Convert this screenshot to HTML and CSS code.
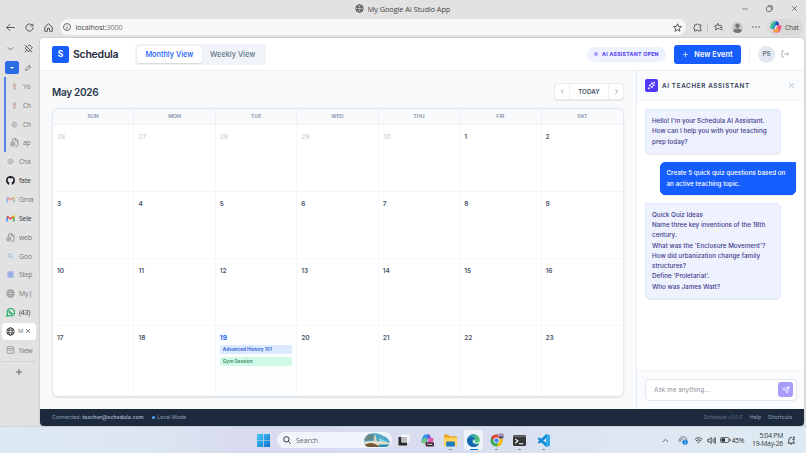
FILE: index.html
```html
<!DOCTYPE html>
<html lang="en">
<head>
  <meta charset="UTF-8" />
  <meta name="viewport" content="width=device-width, initial-scale=1.0"/>
  <title>My Google AI Studio App</title>
  <link rel="stylesheet" href="styles.css">
</head>
<body>
  <!-- Shared icons -->
  <svg class="sprite">
    <symbol id="globe" viewBox="0 0 24 24"><circle cx="12" cy="12" r="10"/><ellipse cx="12" cy="12" rx="4.5" ry="10"/><path d="M3 8.5h18M3 15.5h18"/></symbol>
    <symbol id="close" viewBox="0 0 24 24"><path d="M4 4l16 16M20 4L4 20"/></symbol>
    <symbol id="plus" viewBox="0 0 24 24"><path d="M12 3v18M3 12h18"/></symbol>
    <symbol id="down" viewBox="0 0 24 24"><path d="M3 8l9 9 9-9"/></symbol>
    <symbol id="left" viewBox="0 0 24 24"><path d="M15 5l-7 7 7 7"/></symbol>
    <symbol id="right" viewBox="0 0 24 24"><path d="M9 5l7 7-7 7"/></symbol>
    <symbol id="page" viewBox="0 0 24 24"><path d="M7 9V4q0-2 2-2h7l5 5v13q0 2-2 2h-5M15 2v6h6"/><circle cx="7" cy="16" r="5.5"/><circle cx="7" cy="16" r="2"/></symbol>
    <symbol id="gpt" viewBox="0 0 24 24"><circle cx="12" cy="12" r="12" fill="#efefef" stroke="none"/><circle cx="12" cy="12" r="7.500" fill="#cfcfcf" stroke="#a2a2a2"/><circle cx="12" cy="12" r="3" stroke="#a2a2a2"/></symbol>
    <symbol id="mic" viewBox="0 0 24 24"><rect x="8" y="2" width="8" height="13" rx="4" fill="#dcb3a8"/><path d="M9 18h6v4H9z"/></symbol>
    <symbol id="gmail" viewBox="0 0 24 18"><path d="M3 17V4" stroke="#4285f4"/><path d="M21 17V4" stroke="#34a853"/><path d="M3 3l9 7 9-7" stroke="#ea4335"/><path d="M19 4.5l2-1.5v4" stroke="#fbbc04"/></symbol>
    <symbol id="pin" viewBox="0 0 24 24"><path d="M10 6l4-4 8 8-4 4M6 9l-3 2 10 10 2-4M8 16l-6 6M2 2l20 20"/></symbol>
  </svg>

  <div class="titlebar">
    <div class="window-title">
      <svg class="icon i9"><use href="#globe"/></svg>
      <span>My Google AI Studio App</span>
    </div>
    <div class="window-buttons">
      <svg class="icon i6" viewBox="0 0 24 24"><path d="M1 12h22"/></svg>
      <svg class="icon i7" viewBox="0 0 24 24"><rect x="2" y="6" width="16" height="16" rx="3"/><path d="M7 2h11q4 0 4 4v11"/></svg>
      <svg class="icon i7"><use href="#close"/></svg>
    </div>
  </div>

  <div class="toolbar">
    <div class="nav-buttons">
      <svg class="icon i9" viewBox="0 0 24 24"><path d="M23 12H2M11 3l-9 9 9 9"/></svg>
      <svg class="icon i9" viewBox="0 0 24 24"><path d="M20 7a9.5 9.5 0 1 0 1.5 5M21 2v6h-6"/></svg>
      <svg class="icon i9" viewBox="0 0 24 24"><path d="M2 11L12 2l10 9v11h-7v-8H9v8H2z"/></svg>
    </div>
    <div class="address">
      <svg class="icon i8" viewBox="0 0 24 24"><circle cx="12" cy="12" r="10.5"/><path d="M12 11v7M12 6v2"/></svg>
      <span class="url">localhost:<em>3000</em></span>
      <svg class="icon i9" viewBox="0 0 24 24"><path d="M12 2l3 7 7.500.6-5.700 5 1.700 7.400L12 18l-6.500 4 1.700-7.400-5.700-5L9 9z"/></svg>
    </div>
    <div class="tools">
      <svg class="icon i9" viewBox="0 0 24 24"><path d="M8 5q4-6 7 0h6v5q-6 1 0 7v4h-6q-4-5-7 0H4v-5q-5-4 0-6V5z"/></svg>
      <span class="tool-divider"></span>
      <svg class="icon i9" viewBox="0 0 24 24"><path d="M15 16l-5-2-5 5v-7L1 8l6-1 3-6 3 6h8M16 12h7M17 17h6"/></svg>
      <svg class="i11 profile" viewBox="0 0 24 24"><circle cx="12" cy="12" r="12" fill="#cfcbc6"/><circle cx="12" cy="8" r="5" fill="#777"/><path d="M3 20q0-6 9-6t9 6q-9 8-18 0z" fill="#777"/></svg>
      <svg class="i8 dots" viewBox="0 0 24 24"><circle cx="3" cy="12" r="2"/><circle cx="12" cy="12" r="2"/><circle cx="21" cy="12" r="2"/></svg>
    </div>
    <div class="copilot">
      <svg class="i12" viewBox="0 0 24 24"><path d="M8 1h6q3 0 4 5l-5 1-3 9H4q-4 0-3-5l3-7q1-3 4-3z" fill="#2487e8"/><path d="M4 4q2-3 5-3l2 1-5 11q-1 3-3 3-3-1-2-5z" fill="#3cc28b"/><path d="M16 23h-6q-3 0-4-5l5-1 3-9h6q4 0 3 5l-3 7q-1 3-4 3z" fill="#ef5b8a"/><path d="M6 17h5q2 0 3-4l4 5q-1 5-5 5-5 1-7-6z" fill="#f8a238"/><path d="M12 1h2q3 0 4 7h-4q-2 0-3 3z" fill="#2346c8"/><path d="M11 9h3l-2 7H9z" fill="#f5f5f5"/></svg>
      <span>Chat</span>
    </div>
  </div>

  <div class="browser">
    <nav class="tabs">
      <div class="tabs-top"><svg class="icon i7"><use href="#down"/></svg><svg class="icon i9"><use href="#pin"/></svg></div>
      <div class="tabs-group"><span class="group-button"></span><svg class="icon i6" viewBox="0 0 24 24"><path d="M2 22l2-8L16 2q3-1 6 6L10 20zM13 5l6 6"/></svg></div>
      <div class="grouped">
        <div class="tab faded"><svg class="icon i7 mic"><use href="#mic"/></svg><span>Yo</span></div>
        <div class="tab faded"><svg class="icon i7 mic"><use href="#mic"/></svg><span>Ch</span></div>
        <div class="tab faded"><svg class="icon i9"><use href="#gpt"/></svg><span>Ch</span></div>
        <div class="tab faded"><svg class="icon i9"><use href="#page"/></svg><span>ap</span></div>
      </div>
      <div class="tab faded"><svg class="icon i9"><use href="#gpt"/></svg><span>Cha</span></div>
      <div class="tab"><svg class="i9" viewBox="0 0 24 24"><circle cx="12" cy="12" r="12" fill="#20242a"/><path d="M8.500 24v-5q0-1.500 1-2-5-.5-5-5.500 0-2 1.200-3.300Q5.200 6.500 6 5q1.700 0 3.300 1.200 2.700-.6 5.400 0Q16.500 5 18 5q.8 1.500.3 3.200 1.200 1.300 1.200 3.300 0 5-5 5.500 1 .5 1 2v5z" fill="#e6e6e6"/></svg><span>fate</span></div>
      <div class="tab faded"><svg class="gmail"><use href="#gmail"/></svg><span>Gma</span></div>
      <div class="tab"><svg class="gmail"><use href="#gmail"/></svg><span>Sele</span></div>
      <div class="tab faded"><svg class="icon i9"><use href="#page"/></svg><span>web</span></div>
      <div class="tab faded"><svg class="icon i6 search-tab" viewBox="0 0 24 24"><circle cx="10" cy="10" r="7"/><path d="M15 15l7 7"/></svg><span>Goo</span></div>
      <div class="tab faded"><svg class="i7" viewBox="0 0 24 24"><rect x="1" y="1" width="22" height="22" rx="4" fill="#97ace6"/><path d="M6 8h12M6 15h12" stroke="#7590de" stroke-width="3"/></svg><span>Step</span></div>
      <div class="tab faded"><svg class="icon i9"><use href="#globe"/></svg><span>My (</span></div>
      <div class="tab"><svg class="icon i9 whatsapp" viewBox="0 0 24 24"><path d="M2 22l2-6a10 10 0 1 1 4 4z"/><path d="M8 7q-1 4 3 7 4 3 6 1l-3-2-2 1-3-4 1-1z"/></svg><span>(43)</span></div>
      <div class="tab active"><svg class="icon i9"><use href="#globe"/></svg><span>M</span><svg class="icon i6"><use href="#close"/></svg></div>
      <div class="tab faded"><svg class="icon i8" viewBox="0 0 24 24"><rect x="2" y="2" width="20" height="20" rx="3"/><path d="M2 8h20M6 13h12"/></svg><span>New</span></div>
      <div class="add-tab"><svg class="icon i8"><use href="#plus"/></svg></div>
    </nav>

    <div class="app">
      <header class="app-header">
        <div class="logo">S</div>
        <h1>Schedula</h1>
        <div class="view-switch">
          <button class="view selected">Monthly View</button>
          <button class="view">Weekly View</button>
        </div>
        <div class="header-actions">
          <span class="assistant-badge">AI ASSISTANT OPEN</span>
          <button class="new-event"><svg class="icon i7"><use href="#plus"/></svg>New Event</button>
          <span class="header-divider"></span>
          <span class="avatar">PS</span>
          <svg class="icon i8 logout" viewBox="0 0 24 24"><path d="M9 3H3v18h6M9 12h13M17 7l5 5-5 5"/></svg>
        </div>
      </header>

      <div class="workspace">
        <main class="calendar-panel">
          <div class="calendar-head">
            <h2>May 2026</h2>
            <div class="month-nav">
              <button><svg class="icon i7"><use href="#left"/></svg></button>
              <button class="today-button">TODAY</button>
              <button><svg class="icon i7"><use href="#right"/></svg></button>
            </div>
          </div>
          <div class="calendar">
            <div class="weekday">SUN</div><div class="weekday">MON</div><div class="weekday">TUE</div><div class="weekday">WED</div><div class="weekday">THU</div><div class="weekday">FRI</div><div class="weekday">SAT</div>
            <div class="day other">26</div><div class="day other">27</div><div class="day other">28</div><div class="day other">29</div><div class="day other">30</div><div class="day">1</div><div class="day">2</div>
            <div class="day">3</div><div class="day">4</div><div class="day">5</div><div class="day">6</div><div class="day">7</div><div class="day">8</div><div class="day">9</div>
            <div class="day">10</div><div class="day">11</div><div class="day">12</div><div class="day">13</div><div class="day">14</div><div class="day">15</div><div class="day">16</div>
            <div class="day">17</div><div class="day">18</div>
            <div class="day today">19
              <div class="event class-event">Advanced History 101</div>
              <div class="event personal-event">Gym Session</div>
            </div>
            <div class="day">20</div><div class="day">21</div><div class="day">22</div><div class="day">23</div>
          </div>
        </main>

        <aside class="assistant">
          <div class="assistant-head">
            <span class="assistant-icon"><svg class="icon i9" viewBox="0 0 24 24"><path d="M13 4l2 5 5 2-5 2-2 6-2-5-6-2 6-3zM5 17v5M2.500 19.500h5M19 2v5M16.500 4.500h5"/></svg></span>
            <h3>AI TEACHER ASSISTANT</h3>
            <svg class="icon i7"><use href="#close"/></svg>
          </div>
          <div class="messages">
            <div class="message">Hello! I'm your Schedula AI Assistant.<br>How can I help you with your teaching<br>prep today?</div>
            <div class="message mine">Create 5 quick quiz questions based on<br>an active teaching topic.</div>
            <div class="message">Quick Quiz Ideas<br>Name three key inventions of the 18th<br>century.<br>What was the 'Enclosure Movement'?<br>How did urbanization change family<br>structures?<br>Define 'Proletariat'.<br>Who was James Watt?</div>
          </div>
          <div class="composer">
            <div class="composer-box">
              <span>Ask me anything...</span>
              <button class="send"><svg class="icon i8" viewBox="0 0 24 24"><path d="M22 2L2 9l9 4 4 9zM22 2L11 13"/></svg></button>
            </div>
          </div>
        </aside>
      </div>

      <footer class="status-bar">
        <span>Connected: <b>teacher@schedula.com</b></span>
        <span class="mode">Local Mode</span>
        <span class="version">Schedule v1.0.0</span>
        <span>Help</span>
        <span>Shortcuts</span>
      </footer>
    </div>
  </div>

  <div class="taskbar">
    <div class="task-apps">
      <svg class="start" viewBox="0 0 26 26"><defs><linearGradient id="win" x2="1" y2="1"><stop stop-color="#4cc9f5"/><stop offset="1" stop-color="#0870cf"/></linearGradient></defs><path d="M0 0h12.300v12.300H0zM13.700 0H26v12.300H13.700zM0 13.700h12.300V26H0zM13.700 13.700H26V26H13.700z" fill="url(#win)"/></svg>
      <div class="task-search">
        <svg class="icon i8" viewBox="0 0 24 24"><circle cx="10" cy="10" r="8"/><path d="M16 16l7 7"/></svg>
        <span>Search</span>
        <svg class="search-art" viewBox="0 0 52 28"><defs><clipPath id="hill"><path d="M0 18Q1 4 14 1q16-2 24 5 12 2 14 15-4 7-12 7H10Q1 27 0 18z"/></clipPath></defs><g clip-path="url(#hill)"><path d="M0 0h52v28H0z" fill="#50a9c8"/><path d="M0 4q14-5 22 3L16 15H0z" fill="#668889"/><path d="M20 8l3-5 3 17h-6z" fill="#d9d2bd"/><path d="M30 10l20 9-18 3z" fill="#8dd4e2"/><path d="M0 17q25-3 52 3v5H0z" fill="#e4dfc9"/><path d="M2 23q13-6 22 0l8 5H2z" fill="#765437"/><path d="M29 23h22v5H33z" fill="#238cb6"/></g></svg>
      </div>
      <span class="task"><svg class="i12" viewBox="0 0 24 24"><rect x="7" y="1" width="16" height="16" fill="#f7f7f7"/><path d="M1 6h6v11h11v6H1z" fill="#282828"/><path d="M7 6h11v11H7z" fill="#bdbdbd"/></svg></span>
      <span class="task"><svg class="i13" viewBox="0 0 24 24"><path d="M8 1h6q3 0 4 5l-5 1-3 9H4q-4 0-3-5l3-7q1-3 4-3z" fill="#2499e8"/><path d="M4 9l3-2 4 1-2 7q-2 4-6 2-3-2-2-5z" fill="#7cc47d"/><path d="M14 7h6q4 0 3 5l-3 7q-1 3-4 3h-6q-3 0-3-5h3q2 0 3-4z" fill="#e05bb1"/><path d="M12 1h2q3 0 4 7h-4q-2 0-3 3z" fill="#7057d6"/><rect x="9" y="15" width="15" height="8" rx="2" fill="#3c2c32"/><path d="M12 19h9" stroke="#ddd" stroke-width="2"/></svg></span>
      <span class="task running"><svg class="i13" viewBox="0 0 24 24"><path d="M0 3q0-2 2-2h6l3 3h11q2 0 2 2v7H0z" fill="#e7a825"/><path d="M0 7h24v14q0 1-1 1H1q-1 0-1-1z" fill="#ffd45d"/><path d="M4 16q0-2 2-2h12q2 0 2 2v7H4z" fill="#1f79bd"/></svg></span>
      <span class="task running current"><svg class="i13" viewBox="0 0 24 24"><defs><linearGradient id="edge" x2="1"><stop stop-color="#167cd0"/><stop offset="1" stop-color="#63d46c"/></linearGradient></defs><circle cx="12" cy="12" r="12" fill="url(#edge)"/><path d="M0 12q1-6 9-6 5 0 6 4-5-2-6 2 0 9 13 7-3 5-10 5Q1 23 0 12z" fill="#1163b4"/><path d="M13 11q2-1 2 2-2 3 2 3 4 1 7-3-1 5-6 5-6 0-7-4z" fill="#ecf5fc"/></svg></span>
      <span class="task running"><svg class="i14" viewBox="0 0 28 28"><circle cx="13" cy="15" r="12" fill="#34a853"/><path d="M2.600 9A12 12 0 0 1 24 10H13l-4 8z" fill="#ea4335"/><path d="M24 10a12 12 0 0 1-11 17l6-10-3-7z" fill="#fbbc04"/><circle cx="13" cy="15" r="6" fill="#fff"/><circle cx="13" cy="15" r="4.500" fill="#4285f4"/><circle cx="22" cy="6" r="6" fill="#a993bc"/><path d="M17 8q5-4 10 0-4 6-10 0z" fill="#584962"/></svg></span>
      <span class="task running"><svg class="i13" viewBox="0 0 24 24"><rect x="0" y="2" width="24" height="20" rx="2" fill="#363636"/><path d="M0 5V3h24v2z" fill="#888"/><path d="M4 9l5 4-5 4M11 18h8" fill="none" stroke="#fff" stroke-width="2"/></svg></span>
      <span class="task running"><svg class="i13" viewBox="0 0 24 24"><path d="M17 0l7 3v18l-7 3L1 9l3-3 14 11V7L4 18l-3-3z" fill="#168dd8"/><path d="M17 0l7 3v18l-7 3z" fill="#30a9ef"/></svg></span>
    </div>
    <div class="tray">
      <svg class="icon i7" viewBox="0 0 24 24"><path d="M3 17l9-9 9 9"/></svg>
      <svg class="i10 sync" viewBox="0 0 24 24"><path d="M5 17q-6-4 0-9 4-6 10-3 5 1 6 6" fill="none" stroke="#666" stroke-width="2"/><path d="M5 16q0-7 7-7" fill="none" stroke="#666" stroke-width="2"/><circle cx="17" cy="17" r="6.500" fill="#087bd8"/><path d="M17 16v5M17 12v2" stroke="#fff" stroke-width="2"/></svg>
      <svg class="icon i9 wifi" viewBox="0 0 24 24"><path d="M2 9q10-9 20 0M5 13q7-6 14 0M9 17q3-3 6 0M12 20v1"/></svg>
      <svg class="icon i9" viewBox="0 0 24 24"><path d="M2 9h4l5-5v16l-5-5H2zM15 9q3 3 0 6M18 6q5 6 0 12M21 3q6 9 0 18"/></svg>
      <svg class="battery" viewBox="0 0 22 12"><rect x="1" y="1" width="17" height="10" rx="3" fill="none" stroke="#333" stroke-width="1.500"/><rect x="3" y="3" width="7" height="6" fill="#222"/><path d="M20 4v4" stroke="#333" stroke-width="2"/></svg>
      <span class="charge">45%</span>
      <div class="clock">5:04 PM<br>19-May-26</div>
      <svg class="icon i9" viewBox="0 0 24 24"><path d="M13 3q-8 0-8 8v5l-3 3h18l-2-3v-3M8 20q3 4 6 0M15 3h6l-6 7h6"/></svg>
    </div>
  </div>
</body>
</html>
```
FILE: styles.css
```css
* {
  box-sizing: border-box;
}

body {
  margin: 0;
  width: 806px;
  height: 453px;
  overflow: hidden;
  display: flex;
  flex-direction: column;
  background: #e2e2e2;
  color: #444;
  font-family: 'Open Sans', 'Noto Sans', sans-serif;
  font-size: 7px;
}

button {
  font: inherit;
  color: inherit;
  border: none;
  background: none;
  padding: 0;
}

svg {
  display: block;
  flex: none;
}

.sprite { position: absolute; width: 0; height: 0; }

.icon {
  fill: none;
  stroke: currentColor;
  stroke-width: 2.3;
}

.i6  { width: 6px; height: 6px; }
.i7  { width: 7px; height: 7px; }
.i8  { width: 8px; height: 8px; }
.i9  { width: 9px; height: 9px; }
.i10 { width: 10px; height: 10px; }
.i11 { width: 11px; height: 11px; }
.i12 { width: 12px; height: 12px; }
.i13 { width: 13px; height: 13px; }
.i14 { width: 14px; height: 14px; }

/* Browser window */
.titlebar {
  height: 19px;
  flex: none;
  display: grid;
  grid-template-columns: 1fr auto 1fr;
  align-items: center;
  padding-bottom: 2px;
}

.window-title {
  grid-column: 2;
  display: flex;
  align-items: center;
  gap: 4px;
  padding-right: 1px;
  font-size: 7.4px;
  letter-spacing: -0.1px;
}

.window-buttons {
  display: flex;
  justify-content: flex-end;
  align-items: center;
  gap: 18px;
  padding-right: 8px;
}

.toolbar {
  height: 19px;
  flex: none;
  display: flex;
  padding-bottom: 3px;
  align-items: center;
}

.nav-buttons {
  width: 60px;
  display: flex;
  gap: 10px;
  padding-left: 6px;
}

.address {
  width: 626px;
  height: 16px;
  display: flex;
  align-items: center;
  padding: 0 4px 0 3px;
  border-radius: 8px;
  background: #f7f7f7;
}

.url {
  flex: 1;
  margin-left: 4.5px;
  font-size: 7.2px;
  letter-spacing: -0.1px;
}

.url em {
  font-style: normal;
  color: #777;
}

.tools {
  width: 81px;
  display: flex;
  align-items: center;
  padding-left: 7px;
}

.tool-divider {
  width: 1px;
  height: 9px;
  margin: 0 6px 0 5px;
  background: #c2c2c2;
}

.profile { margin-left: 8.5px; }
.dots { margin-left: 9.5px; fill: #444; }

.copilot {
  width: 36px;
  height: 17px;
  display: flex;
  align-items: center;
  gap: 3px;
  padding-left: 3px;
  border-radius: 8px;
  background: #d9d9d9;
  font-size: 6.6px;
  letter-spacing: -0.1px;
}

.browser {
  height: 388px;
  flex: none;
  display: flex;
}

.tabs {
  width: 40px;
  flex: none;
}

.tabs-top,
.tabs-group {
  display: flex;
  align-items: center;
  gap: 10px;
  padding-left: 7px;
}

.tabs-top { height: 20px; }
.tabs-group { height: 19px; padding-left: 5px; gap: 6px; }

.group-button {
  width: 14px;
  height: 13px;
  display: flex;
  align-items: center;
  justify-content: center;
  border-radius: 2px;
  background: #2c6de4;
}

.group-button::after {
  content: '';
  border: 2px solid transparent;
  border-top: 2.5px solid #fff;
  border-bottom: 0;
}

.grouped {
  margin-left: 4px;
  border-left: 2px solid #4f82e3;
}

.tab {
  height: 18.85px;
  width: 34px;
  display: flex;
  align-items: center;
  gap: 4px;
  padding-left: 6px;
  color: #333;
  font-size: 6.8px;
  letter-spacing: -0.2px;
  white-space: nowrap;
}

.tab > svg:first-child {
  width: 9px;
}

.tab.faded { color: #777; }
.tab.faded > svg { opacity: 0.8; }
.grouped .tab { width: 28px; padding-left: 4px; }
.mic { color: #b3958e; }
.tab .gmail { height: 7px; fill: none; stroke-width: 4; }
.tab.faded .gmail { opacity: 0.5; }
.search-tab { color: #5b9bc5; }
.whatsapp { color: #20ad63; stroke-width: 3; }

.tab.active {
  width: 34px;
  height: 17px;
  margin: 1px 0 0.8px 2px;
  padding-left: 4px;
  gap: 3px;
  border-radius: 4px;
  background: #fff;
}

.active span { font-size: 6px; color: #777; }
.tab.active span + svg { margin-left: -1px; }

.add-tab {
  height: 22px;
  margin: 1px 4px 0 2px;
  display: flex;
  align-items: center;
  justify-content: center;
  border-top: 1px solid #d2d2d2;
}

/* Scheduler */
.app {
  width: 764px;
  height: 388px;
  display: flex;
  flex-direction: column;
  overflow: hidden;
  border-radius: 4px;
  background: #f8fafc;
  color: #1e293b;
  box-shadow: 0 0 2px rgba(0,0,0,0.25);
  font-family: Inter, 'Liberation Sans', sans-serif;
}

.app-header {
  height: 33px;
  flex: none;
  display: flex;
  align-items: center;
  padding: 0 15px 0 12px;
  background: #fff;
  border-bottom: 1px solid #edf1f6;
}

.logo {
  width: 17px;
  height: 17px;
  border-radius: 2px;
  background: #155dfc;
  color: #fff;
  font-size: 8.4px;
  font-weight: 700;
  line-height: 17px;
  text-align: center;
}

h1 {
  margin: 0 0 0 4px;
  width: 62px;
  font-size: 10.5px;
  font-weight: 600;
  letter-spacing: -0.25px;
}

.view-switch {
  height: 21px;
  display: flex;
  padding: 2px;
  border-radius: 4px;
  background: #f1f5f9;
}

.view {
  padding: 0 8.4px;
  border-radius: 3px;
  color: #64748b;
  font-size: 7.35px;
  font-weight: 500;
}

.view.selected {
  background: #fff;
  color: #155dfc;
  box-shadow: 0 0.5px 1.5px rgba(0,0,0,0.13);
}

.header-actions {
  margin-left: auto;
  display: flex;
  align-items: center;
}

.assistant-badge {
  width: 79px;
  height: 15px;
  display: flex;
  align-items: center;
  gap: 4px;
  padding-left: 7px;
  border-radius: 8px;
  background: #eef2ff;
  color: #4f39f6;
  font-size: 5.25px;
  font-weight: 700;
  letter-spacing: 0.25px;
  white-space: nowrap;
}

.assistant-badge::before {
  content: '';
  width: 4px;
  height: 4px;
  border-radius: 50%;
  background: #a59bf7;
}

.new-event {
  width: 67px;
  height: 19px;
  margin-left: 8px;
  display: flex;
  align-items: center;
  justify-content: center;
  gap: 5px;
  border-radius: 3px;
  background: #155dfc;
  color: #fff;
  font-size: 7.35px;
  font-weight: 600;
  letter-spacing: 0.05px;
}

.header-divider {
  width: 1px;
  height: 17px;
  margin: 0 8px;
  background: #edf1f6;
}

.avatar {
  width: 17px;
  height: 17px;
  border-radius: 50%;
  background: #e2e8f0;
  color: #64748b;
  font-size: 6.3px;
  font-weight: 600;
  line-height: 17px;
  text-align: center;
}

.logout { margin-left: 6px; color: #94a3b8; }

.workspace {
  flex: 1;
  min-height: 0;
  display: flex;
}

.calendar-panel {
  width: 596px;
  padding: 12px;
  display: flex;
  flex-direction: column;
}

.calendar-head {
  height: 25px;
  flex: none;
  display: flex;
  justify-content: space-between;
  align-items: flex-start;
}

h2 {
  margin: 0;
  color: #2b384b;
  font-size: 10px;
  font-weight: 600;
  line-height: 18px;
  letter-spacing: -0.28px;
}

.month-nav {
  width: 70px;
  height: 17px;
  display: flex;
  border: 1px solid #e8edf3;
  border-radius: 4px;
  background: #fff;
  box-shadow: 0 0.5px 1px rgba(0,0,0,0.08);
}

.month-nav button {
  flex: 1;
  display: flex;
  align-items: center;
  justify-content: center;
  color: #64748b;
}

.month-nav .today-button {
  flex: none;
  width: 40px;
  border: solid #edf1f6;
  border-width: 0 1px;
  color: #475569;
  font-size: 6.3px;
  font-weight: 600;
}

.calendar {
  flex: 1;
  min-height: 0;
  display: grid;
  grid-template-columns: repeat(7, 1fr);
  grid-template-rows: 16px 67px 67px 67px 1fr;
  overflow: hidden;
  border: 1px solid #e5eaf1;
  border-radius: 6px;
  background: #fff;
  box-shadow: 0 0.5px 1.5px rgba(0,0,0,0.1);
}

.weekday {
  background: #f8fafc;
  border-right: 1px solid #edf1f6;
  border-bottom: 1px solid #edf1f6;
  color: #8492a8;
  font-size: 5.25px;
  font-weight: 600;
  line-height: 15px;
  text-align: center;
}

.day {
  padding: 8px 4px 0;
  border-right: 1px solid #f5f7fa;
  border-bottom: 1px solid #f5f7fa;
  color: #475569;
  font-size: 6.5px;
  font-weight: 600;
  line-height: 8px;
}

.weekday:nth-child(7n),
.day:nth-child(7n) { border-right: none; }

.other { color: #c5ced9; font-weight: 500; }
.today { background: #fcfeff; color: #155dfc; font-weight: 700; }

.event {
  height: 9px;
  margin-top: 2.5px;
  padding-left: 3px;
  border-radius: 2px;
  font-size: 4.72px;
  font-weight: 600;
  line-height: 9px;
}

.today .event:first-child { margin-top: 3px; }
.class-event { background: #dbeafe; color: #3158d4; }
.personal-event { background: #d0fae5; color: #398669; }

/* Assistant */
.assistant {
  width: 168px;
  display: flex;
  flex-direction: column;
  background: #fff;
  border-left: 1px solid #e8edf3;
}

.assistant-head {
  height: 30px;
  flex: none;
  display: flex;
  align-items: center;
  padding: 0 9px 0 8px;
  background: #f9fbfd;
  border-bottom: 1px solid #f1f5f9;
  color: #94a3b8;
}

.assistant-icon {
  width: 13px;
  height: 13px;
  display: flex;
  align-items: center;
  justify-content: center;
  border-radius: 2px;
  background: #4f39f6;
  color: #fff;
}

h3 {
  margin: 0;
  padding-left: 4px;
  flex: 1;
  color: #334155;
  font-size: 6.3px;
  font-weight: 600;
  letter-spacing: 0.65px;
  white-space: nowrap;
}

.messages {
  flex: 1;
  display: flex;
  flex-direction: column;
  align-items: flex-start;
  gap: 8px;
  padding: 8px;
}

.message {
  width: 136px;
  padding: 6px;
  border: 1px solid #e4eaff;
  border-radius: 0 5px 5px 5px;
  background: #eef2ff;
  color: #433b8b;
  font-size: 6.3px;
  font-weight: 500;
  line-height: 10.25px;
  white-space: nowrap;
  box-shadow: 0 0.5px 1px rgba(0,0,0,0.08);
}

.message.mine {
  align-self: flex-end;
  padding: 5.5px 5.5px 5px;
  border-color: #155dfc;
  border-radius: 5px 0 5px 5px;
  background: #155dfc;
  color: #fff;
}

.composer {
  height: 39px;
  padding: 8px 7px 8px 8px;
  background: #f9fbfd;
  border-top: 1px solid #f1f5f9;
}

.composer-box {
  height: 22px;
  display: flex;
  align-items: center;
  justify-content: space-between;
  padding: 0 3px 0 8px;
  border: 1px solid #e2e8f0;
  border-radius: 4px;
  background: #fff;
  color: #8d929c;
  font-size: 6.4px;
}

.send {
  width: 15px;
  height: 15px;
  display: flex;
  align-items: center;
  justify-content: center;
  border-radius: 3px;
  background: #a79cfb;
  color: #fff;
}

.status-bar {
  height: 17.5px;
  flex: none;
  display: flex;
  align-items: center;
  padding: 0 12px;
  background: #1d293d;
  color: #90a1b9;
  font-size: 5.25px;
  white-space: nowrap;
}

.status-bar span + span { margin-left: 7px; }

.status-bar .mode {
  display: flex;
  align-items: center;
  gap: 2px;
}

.status-bar span + .mode { margin-left: 8px; }

.mode::before {
  content: '';
  width: 3.5px;
  height: 3.5px;
  border-radius: 50%;
  background: #51a2ff;
}

.status-bar span + .version { margin-left: auto; color: #62738b; }

/* Taskbar */
.taskbar {
  flex: 1;
  display: flex;
  justify-content: space-between;
  border-top: 1.5px solid #cfd3d8;
  background: linear-gradient(90deg, #dce8f2 0, #dce6f2 20%, #d8daee 30%, #d9def0 60%, #dfe8f2 80%, #deebf4 100%);
}

.task-apps {
  display: flex;
  align-items: center;
  padding-left: 257px;
}

.start { width: 13px; height: 13px; }

.task-search {
  width: 115px;
  height: 16px;
  margin: 0 2.5px 0 7px;
  display: flex;
  align-items: center;
  padding: 0 2px 0 6px;
  border-radius: 8px;
  background: #f1f4fb;
  color: #666;
  font-size: 7px;
}

.task-search .icon { color: #333; stroke-width: 3; }
.task-search span { flex: 1; margin-left: 5px; }
.search-art { width: 26px; height: 14px; }

.task {
  position: relative;
  width: 19px;
  height: 20px;
  margin-right: 4.2px;
  display: flex;
  align-items: center;
  justify-content: center;
  border-radius: 2px;
}

.running::after {
  content: '';
  position: absolute;
  bottom: 0;
  width: 3px;
  height: 1px;
  border-radius: 1px;
  background: #85878f;
}

.current { background: #eef2fa; }
.current::after { width: 8px; height: 1.5px; background: #0875ce; }

.tray {
  display: flex;
  align-items: center;
  padding-right: 10px;
  color: #333;
}

.sync { margin-left: 9px; }
.wifi { margin: 0 4px 0 6px; }
.battery { width: 11px; height: 6px; margin-left: 4px; }
.charge { margin-left: 1px; font-size: 6.7px; letter-spacing: -0.3px; }

.clock {
  width: 39px;
  margin-right: 4px;
  font-size: 6.7px;
  line-height: 8px;
  letter-spacing: -0.2px;
  text-align: right;
  white-space: nowrap;
}
```
